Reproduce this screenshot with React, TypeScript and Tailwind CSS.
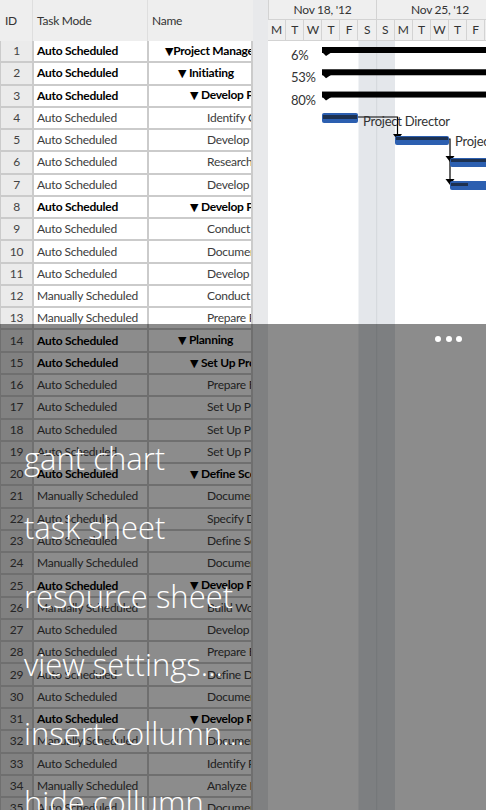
type Row = { id: number; mode: string; name: string; bold?: boolean; level: number };

const rows: Row[] = [
  { id: 1, mode: "Auto Scheduled", name: "▼Project Management Plan", bold: true, level: 0 },
  { id: 2, mode: "Auto Scheduled", name: "▼ Initiating", bold: true, level: 1 },
  { id: 3, mode: "Auto Scheduled", name: "▼ Develop Project Charter", bold: true, level: 2 },
  { id: 4, mode: "Auto Scheduled", name: "Identify Goals", level: 3 },
  { id: 5, mode: "Auto Scheduled", name: "Develop Strategies", level: 3 },
  { id: 6, mode: "Auto Scheduled", name: "Research Experience", level: 3 },
  { id: 7, mode: "Auto Scheduled", name: "Develop Initial Plan", level: 3 },
  { id: 8, mode: "Auto Scheduled", name: "▼ Develop Project Scope", bold: true, level: 2 },
  { id: 9, mode: "Auto Scheduled", name: "Conduct Review", level: 3 },
  { id: 10, mode: "Auto Scheduled", name: "Document Findings", level: 3 },
  { id: 11, mode: "Auto Scheduled", name: "Develop Issues List", level: 3 },
  { id: 12, mode: "Manually Scheduled", name: "Conduct Meetings", level: 3 },
  { id: 13, mode: "Manually Scheduled", name: "Prepare Report", level: 3 },
  { id: 14, mode: "Auto Scheduled", name: "▼ Planning", bold: true, level: 1 },
  { id: 15, mode: "Auto Scheduled", name: "▼ Set Up Project", bold: true, level: 2 },
  { id: 16, mode: "Auto Scheduled", name: "Prepare Folders", level: 3 },
  { id: 17, mode: "Auto Scheduled", name: "Set Up Project File", level: 3 },
  { id: 18, mode: "Auto Scheduled", name: "Set Up Project Site", level: 3 },
  { id: 19, mode: "Auto Scheduled", name: "Set Up Project Team", level: 3 },
  { id: 20, mode: "Auto Scheduled", name: "▼ Define Scope", bold: true, level: 2 },
  { id: 21, mode: "Manually Scheduled", name: "Document Scope", level: 3 },
  { id: 22, mode: "Auto Scheduled", name: "Specify Deliverables", level: 3 },
  { id: 23, mode: "Auto Scheduled", name: "Define Scope Limits", level: 3 },
  { id: 24, mode: "Manually Scheduled", name: "Document Assumptions", level: 3 },
  { id: 25, mode: "Auto Scheduled", name: "▼ Develop Plan", bold: true, level: 2 },
  { id: 26, mode: "Manually Scheduled", name: "Build Work Breakdown", level: 3 },
  { id: 27, mode: "Auto Scheduled", name: "Develop Network", level: 3 },
  { id: 28, mode: "Auto Scheduled", name: "Prepare Estimates", level: 3 },
  { id: 29, mode: "Auto Scheduled", name: "Define Deliverables", level: 3 },
  { id: 30, mode: "Auto Scheduled", name: "Document Plan", level: 3 },
  { id: 31, mode: "Auto Scheduled", name: "▼ Develop Risk Plan", bold: true, level: 2 },
  { id: 32, mode: "Manually Scheduled", name: "Document Risks", level: 3 },
  { id: 33, mode: "Auto Scheduled", name: "Identify Risks", level: 3 },
  { id: 34, mode: "Manually Scheduled", name: "Analyze Risks", level: 3 },
  { id: 35, mode: "Auto Scheduled", name: "Document Responses", level: 3 },
];

const indent = ["pl-[16px]", "pl-[29px]", "pl-[41px]", "pl-[58px]"];
const days = ["M", "T", "W", "T", "F", "S", "S", "M", "T", "W", "T", "F", "S"];
const menu = ["gant chart", "task sheet", "resource sheet", "view settings...", "insert collumn...", "hide collumn..."];

const RH = 22.275;
const FONT = "Lato, sans-serif";

const TaskName = ({ name }: { name: string }) => {
  if (!name.startsWith("▼")) return <span>{name}</span>;
  return (
    <span className="whitespace-pre">
      <span className="font-['DejaVu_Sans',sans-serif] text-[11px]">▼</span>
      {name.slice(1)}
    </span>
  );
};

const GanttBody = () => {
  const pct = ["6%", "53%", "80%"];
  return (
    <svg width="218" height="769" className="block">
      <rect x="90.5" y="0" width="36.5" height="769" fill="#e4e7eb" />
      <line x1="108.7" y1="0" x2="108.7" y2="769" stroke="#d3d7dc" strokeWidth="1" />

      {/* summary bars */}
      {pct.map((p, i) => {
        const t = 6 + i * RH;
        return (
          <g key={p}>
            <rect x="54" y={t} width="170" height="6" fill="#000" />
            <polygon points={`54,${t + 5} 64,${t + 5} 58,${t + 9}`} fill="#000" />
            <text x="23" y={t + 13} fontSize="13" fill="#333" fontFamily={FONT}>
              {p}
            </text>
          </g>
        );
      })}

      {/* row 4 */}
      <rect x="54" y="72" width="36" height="10" rx="2" fill="#2c5fb0" />
      <rect x="55" y="74" width="34" height="4" fill="#1d3150" />
      <path d="M90 76 H129.5 V94" stroke="#000" strokeWidth="1.2" fill="none" />
      <text x="95" y="85" fontSize="13" fill="#333" fontFamily={FONT}>
        Project Director
      </text>
      <polygon points="125,93 134,93 129.5,99" fill="#000" />

      {/* row 5 */}
      <rect x="127" y="95" width="54" height="9" rx="2" fill="#2c5fb0" />
      <rect x="128" y="96" width="52" height="3" fill="#1d3150" />
      <text x="187" y="105" fontSize="13" fill="#333" fontFamily={FONT}>
        Project Director
      </text>
      <path d="M181 98 H182 V140" stroke="#000" strokeWidth="1.2" fill="none" />
      <polygon points="177.5,115 186.5,115 182,121" fill="#000" />
      <polygon points="177.5,138 186.5,138 182,144" fill="#000" />

      {/* row 6 */}
      <rect x="182" y="117" width="40" height="9" rx="2" fill="#2c5fb0" />
      <rect x="183" y="118" width="40" height="3" fill="#1d3150" />

      {/* row 7 */}
      <rect x="182" y="140" width="40" height="9" rx="2" fill="#2c5fb0" />
      <rect x="183" y="142" width="17" height="3" fill="#1d3150" />
    </svg>
  );
};

export default function App() {
  return (
    <div className="relative w-[486px] h-[810px] overflow-hidden bg-white font-['Lato',sans-serif] text-[12px] tracking-[-0.25px]">
      <div className="flex h-full">
        {/* task grid */}
        <div className="w-[253px] shrink-0 bg-[#cbcbcb]">
          <div className="flex h-[41px] bg-[#eeeeee] text-[#333]">
            <div className="w-[33px] pl-[5px] flex items-center border-r border-[#dedede]">ID</div>
            <div className="w-[115px] pl-[4px] flex items-center border-r border-[#dedede]">Task Mode</div>
            <div className="flex-1 pl-[4px] flex items-center">Name</div>
          </div>
          {rows.map((r) => (
            <div key={r.id} className="flex gap-[2px] h-[22.275px] pb-[2px] pl-[1px] pr-[2px]">
              <div className="w-[31px] bg-[#ebebeb] flex items-center justify-center text-[#444]">{r.id}</div>
              <div
                className={`w-[113px] bg-white flex items-center pl-[3px] whitespace-nowrap overflow-hidden ${
                  r.bold ? "font-bold text-black" : "text-[#3c3c3c]"
                }`}
              >
                {r.mode}
              </div>
              <div
                className={`flex-1 bg-white flex items-center overflow-hidden whitespace-nowrap ${indent[r.level]} ${
                  r.bold ? "font-bold text-black" : "text-[#3c3c3c]"
                }`}
              >
                <TaskName name={r.name} />
              </div>
            </div>
          ))}
        </div>

        {/* splitter */}
        <div className="w-[15px] shrink-0 bg-[#e8e9eb]" />

        {/* gantt */}
        <div className="flex-1 overflow-hidden">
          <div className="bg-[#efefef] text-[#333] w-[260px]">
            <div className="flex h-[20px] border-b border-[#d3d3d3]">
              <div className="w-[109px] shrink-0 border-x border-[#d3d3d3] flex items-center justify-center">Nov 18, '12</div>
              <div className="w-[127px] shrink-0 border-r border-[#d3d3d3] flex items-center justify-center">Nov 25, '12</div>
            </div>
            <div className="flex h-[21px] border-b border-[#d3d3d3]">
              {days.map((d, i) => (
                <div key={i} className="w-[18.1px] shrink-0 border-r border-[#d3d3d3] flex items-center justify-center">
                  {d}
                </div>
              ))}
            </div>
          </div>
          <GanttBody />
        </div>
      </div>

      {/* app bar menu */}
      <div className="absolute left-0 right-0 top-[324px] bottom-0 bg-[rgba(0,0,0,0.45)] flex flex-col font-['Open_Sans',sans-serif] tracking-normal">
        <div className="flex justify-end gap-[4.5px] pr-[24px] pt-[12px] h-[30px]">
          <span className="w-[6px] h-[6px] rounded-full bg-white" />
          <span className="w-[6px] h-[6px] rounded-full bg-white" />
          <span className="w-[6px] h-[6px] rounded-full bg-white" />
        </div>
        <ul className="pt-[82px] pl-[24px]">
          {menu.map((m) => (
            <li key={m} className="text-white text-[31px] font-light leading-[68.8px] whitespace-nowrap">
              {m}
            </li>
          ))}
        </ul>
      </div>
    </div>
  );
}
